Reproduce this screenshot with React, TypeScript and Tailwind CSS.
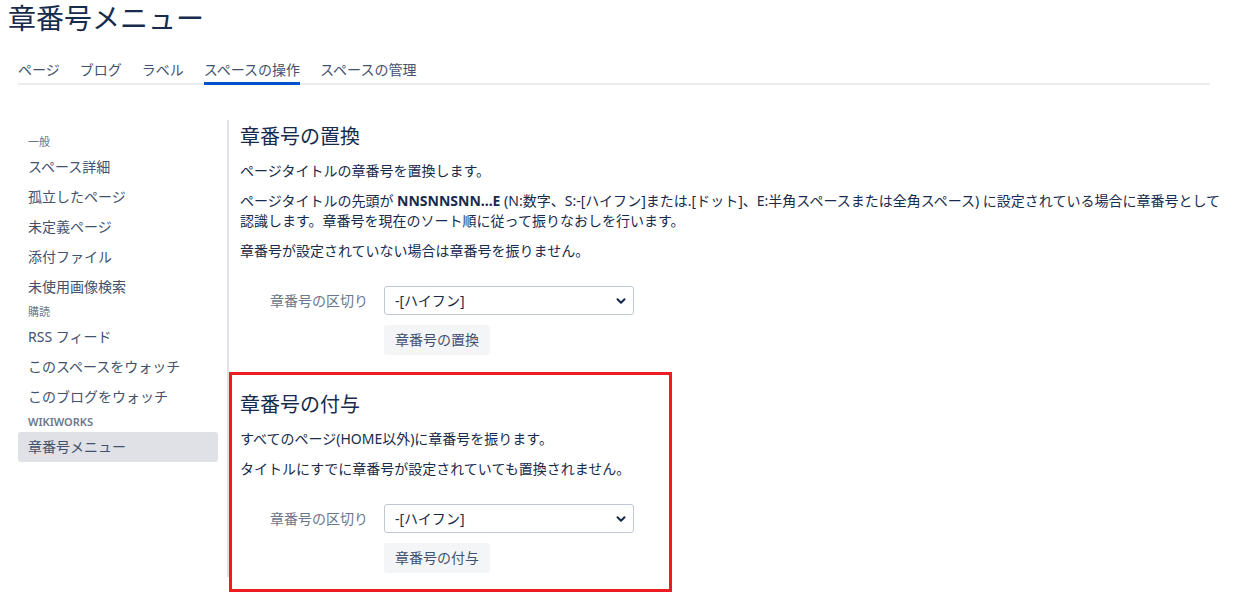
import { ChevronDown } from "lucide-react";

const font = "font-['Noto_Sans','Noto_Sans_CJK_JP',sans-serif]";

const tabs = ["ページ", "ブログ", "ラベル", "スペースの操作", "スペースの管理"];

type NavEntry = { label: string; heading?: boolean; bold?: boolean; active?: boolean };

const nav: NavEntry[] = [
  { label: "一般", heading: true },
  { label: "スペース詳細" },
  { label: "孤立したページ" },
  { label: "未定義ページ" },
  { label: "添付ファイル" },
  { label: "未使用画像検索" },
  { label: "購読", heading: true },
  { label: "RSS フィード" },
  { label: "このスペースをウォッチ" },
  { label: "このブログをウォッチ" },
  { label: "WIKIWORKS", heading: true, bold: true },
  { label: "章番号メニュー", active: true },
];

function SeparatorForm({ button }: { button: string }) {
  return (
    <div className="mt-[25px]">
      <div className="flex items-center">
        <label className="w-[128px] text-right text-sm text-[#6b778c] leading-5">章番号の区切り</label>
        <div className="relative ml-4 w-[250px]">
          <select
            defaultValue="-"
            className="w-full h-[29px] appearance-none rounded-[3px] border border-[#c1c7d0] bg-white pl-[10px] pr-8 text-sm text-[#172b4d] outline-none"
          >
            <option value="-">-[ハイフン]</option>
            <option value=".">.[ドット]</option>
          </select>
          <ChevronDown
            size={14}
            strokeWidth={3.5}
            className="pointer-events-none absolute right-[6px] top-[8px] text-[#172b4d]"
          />
        </div>
      </div>
      <div className="mt-[10px] ml-[144px]">
        <button className="h-[30px] rounded-[3px] bg-[#f4f5f7] px-[11px] text-sm text-[#42526e]">
          {button}
        </button>
      </div>
    </div>
  );
}

export default function App() {
  return (
    <div className={`${font} min-h-screen bg-white text-[#172b4d]`}>
      <h1 className="pl-2 text-[28px] leading-[36px] font-normal text-[#172b4d]">章番号メニュー</h1>

      {/* Tabs */}
      <div className="mt-6 ml-[18px] w-[1192px] flex gap-5 border-b-2 border-[#ebecf0]">
        {tabs.map(t => (
          <div
            key={t}
            className={
              "text-sm leading-5 pb-[2px] -mb-[2px] border-b-[3px] text-[#42526e] " +
              (t === "スペースの操作" ? "border-[#0052cc]" : "border-transparent")
            }
          >
            {t}
          </div>
        ))}
      </div>

      <div className="mt-[35px] ml-[18px] mr-2 flex">
        {/* Sidebar */}
        <div className="w-[211px] h-[457px] shrink-0 border-r-2 border-[#dfe1e6] pr-[9px] pt-3">
          {nav.map(n =>
            n.heading ? (
              <div
                key={n.label}
                className={"h-5 leading-5 pl-[10px] text-[11px] text-[#6b778c] " + (n.bold ? "font-semibold" : "")}
              >
                {n.label}
              </div>
            ) : (
              <div
                key={n.label}
                className={
                  "h-[30px] leading-[30px] pl-[10px] text-sm rounded-[3px] text-[#42526e] " +
                  (n.active ? "bg-[#dfe1e6]" : "")
                }
              >
                {n.label}
              </div>
            )
          )}
        </div>

        {/* Content */}
        <div className="flex-1 min-w-0 pt-[3px]">
          <section className="pl-[11px]">
            <h2 className="text-xl leading-7 font-normal">章番号の置換</h2>
            <p className="mt-[10px] text-sm leading-5">ページタイトルの章番号を置換します。</p>
            <p className="mt-[10px] text-sm leading-5">
              ページタイトルの先頭が <b className="font-bold">NNSNNSNN...E</b> (N:数字、S:-[ハイフン]または.[ドット]、E:半角スペースまたは全角スペース) に設定されている場合に章番号として認識します。章番号を現在のソート順に従って振りなおしを行います。
            </p>
            <p className="mt-[10px] text-sm leading-5">章番号が設定されていない場合は章番号を振りません。</p>
            <SeparatorForm button="章番号の置換" />
          </section>

          <section className="mt-[17px] w-[443px] border-[3px] border-[#ed1c24] pl-2 pt-4 pb-4">
            <h2 className="text-xl leading-7 font-normal">章番号の付与</h2>
            <p className="mt-[10px] text-sm leading-5">すべてのページ(HOME以外)に章番号を振ります。</p>
            <p className="mt-[10px] text-sm leading-5">タイトルにすでに章番号が設定されていても置換されません。</p>
            <SeparatorForm button="章番号の付与" />
          </section>
        </div>
      </div>
    </div>
  );
}
